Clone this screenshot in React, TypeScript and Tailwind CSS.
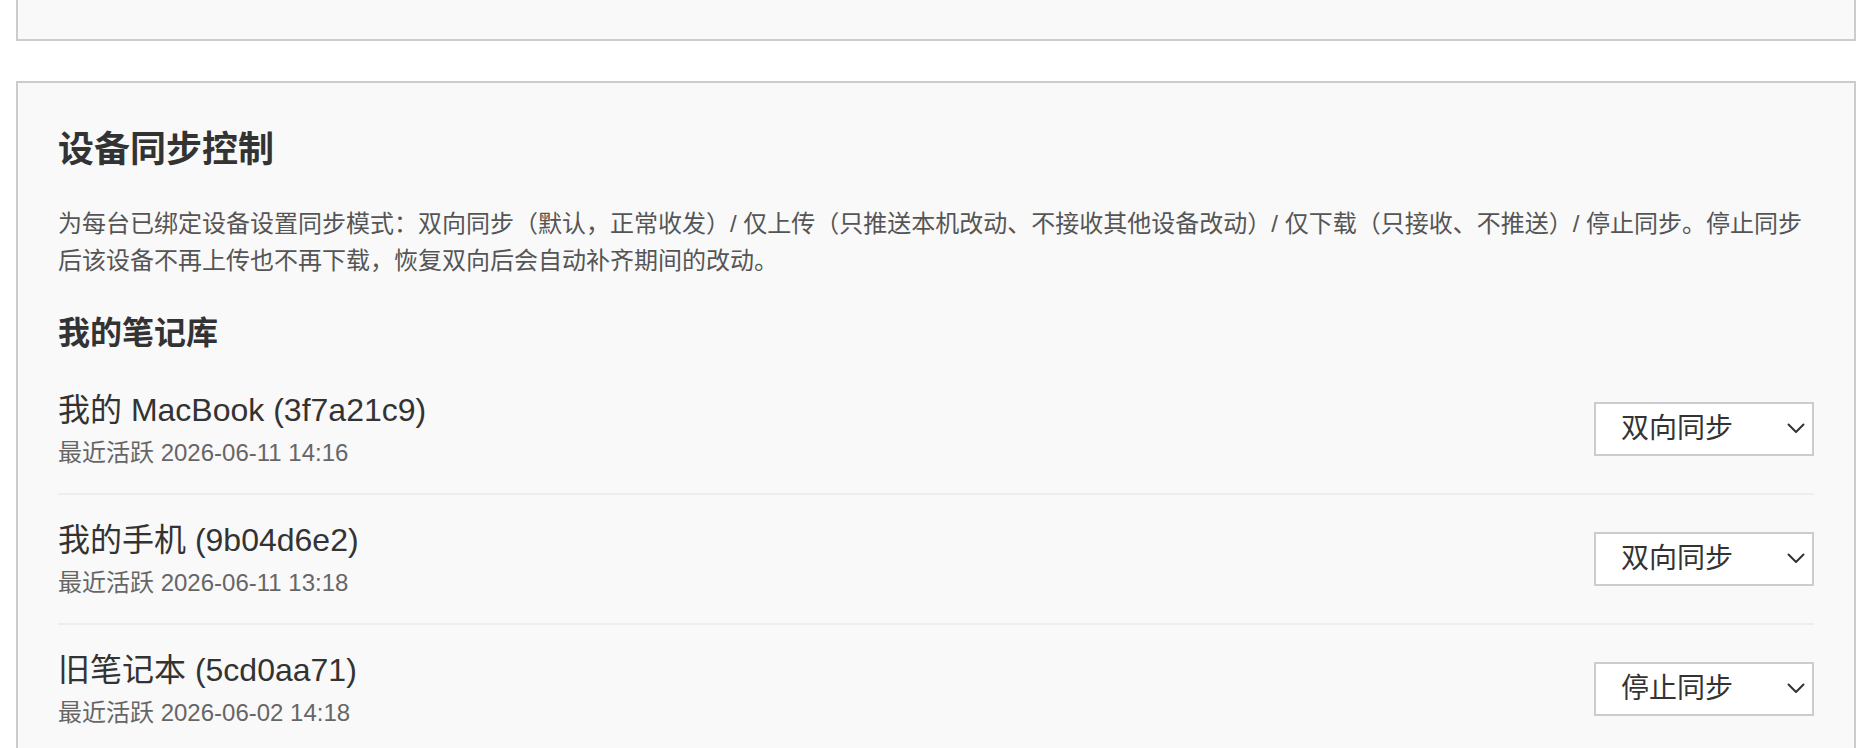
import * as React from "react";

type SyncMode = "双向同步" | "仅上传" | "仅下载" | "停止同步";

interface Device {
  id: string;
  name: string;
  lastActive: string;
  mode: SyncMode;
}

const devices: Device[] = [
  { id: "3f7a21c9", name: "我的 MacBook", lastActive: "2026-06-11 14:16", mode: "双向同步" },
  { id: "9b04d6e2", name: "我的手机", lastActive: "2026-06-11 13:18", mode: "双向同步" },
  { id: "5cd0aa71", name: "旧笔记本", lastActive: "2026-06-02 14:18", mode: "停止同步" },
];

// Select-like box with a chevron
function ModeSelect({ value }: { value: SyncMode }) {
  return (
    <div className="flex h-[54px] w-[220px] shrink-0 items-center justify-between border-2 border-[#ccc] bg-white pl-[25px] pr-[7px] text-[28px] text-[#333]">
      <span className="leading-none">{value}</span>
      <svg width="18" height="11" viewBox="0 0 18 11" fill="none" className="mb-[1px]">
        <path d="M1.5 1.5 L9 9 L16.5 1.5" stroke="#333" strokeWidth="2" strokeLinecap="round" strokeLinejoin="round" />
      </svg>
    </div>
  );
}

function DeviceRow({ device }: { device: Device }) {
  return (
    <div className="flex h-[130px] items-center justify-between border-b-2 border-[#eee]">
      <div className="flex flex-col">
        <div className="text-[32px] leading-[46px] text-[#333]">
          {device.name} ({device.id})
        </div>
        <div className="mt-[2px] text-[24px] leading-[36px] text-[#666]">
          最近活跃 {device.lastActive}
        </div>
      </div>
      <ModeSelect value={device.mode} />
    </div>
  );
}

export default function App() {
  return (
    <div className="h-[748px] overflow-hidden bg-white px-4 font-['Liberation_Sans','Noto_Sans_CJK_SC',sans-serif]">
      {/* previous card, scrolled mostly out of view */}
      <div className="h-[41px] border-x-2 border-b-2 border-[#ccc] bg-[#f9f9f9]" />

      <section className="mt-10 border-2 border-[#ccc] bg-[#f9f9f9] px-10 pt-10 pb-10">
        <h2 className="text-[36px] font-bold leading-[54px] text-[#333]">设备同步控制</h2>
        <p className="mt-[28px] text-[24px] leading-[37px] text-[#555]">
          为每台已绑定设备设置同步模式：双向同步（默认，正常收发）/ 仅上传（只推送本机改动、不接收其他设备改动）/ 仅下载（只接收、不推送）/ 停止同步。停止同步后该设备不再上传也不再下载，恢复双向后会自动补齐期间的改动。
        </p>

        <h3 className="mt-[30px] text-[32px] font-bold leading-[48px] text-[#333]">我的笔记库</h3>
        <div className="mt-[8px]">
          {devices.map((d) => (
            <DeviceRow key={d.id} device={d} />
          ))}
        </div>
      </section>
    </div>
  );
}
